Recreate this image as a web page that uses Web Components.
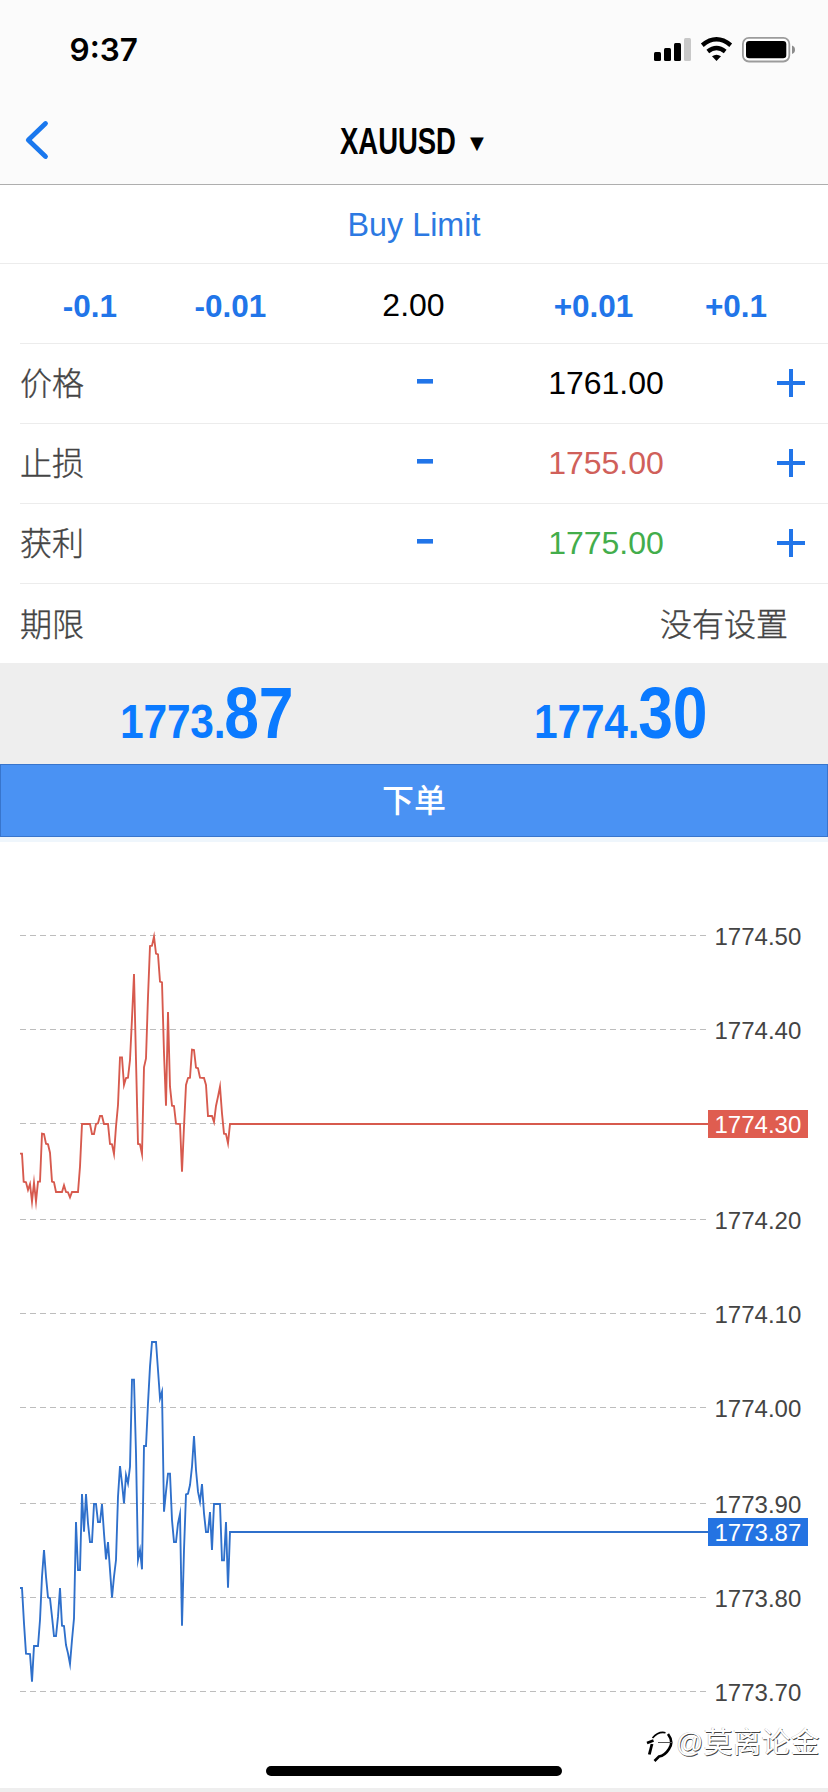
<!DOCTYPE html>
<html lang="zh-CN">
<head>
<meta charset="utf-8">
<title>XAUUSD</title>
<style>
html,body{margin:0;padding:0;background:#fff}
body{width:828px;height:1792px;overflow:hidden;font-family:"Liberation Sans","Noto Sans CJK SC",sans-serif;color:#000}
</style>
</head>
<body>
<order-screen></order-screen>
<script>
const define = (name, html, after) => {
  const tpl = document.createElement('template');
  tpl.innerHTML = html;
  customElements.define(name, class extends HTMLElement {
    constructor() {
      super();
      this.attachShadow({ mode: 'open' }).appendChild(tpl.content.cloneNode(true));
    }
    connectedCallback() { if (after) after(this, this.shadowRoot); }
  });
};

define('status-bar', `
<style>
:host{display:flex;justify-content:space-between;align-items:center;height:99px;padding:0 33.500px 0 69.500px;box-sizing:border-box}
.time{font:600 31.500px/40px Inter,sans-serif;padding-top:1px}
svg{display:block}
</style>
<span class="time">9:37</span>
<svg width="142" height="26" viewBox="652 37 142 26" aria-hidden="true">
  <rect x="653" y="52" width="7" height="9" rx="1.5"/><rect x="663" y="48" width="7" height="13" rx="1.5"/>
  <rect x="673" y="43" width="7" height="18" rx="1.5"/><rect x="683" y="38" width="7" height="23" rx="1.5" fill="#c8c8c8"/>
  <g fill="none" stroke="#000" stroke-width="4.4"><path d="M701.3 45.2Q715.5 33.4 729.7 45.2"/><path d="M706.8 51.4Q715.5 44.6 724.2 51.4"/></g>
  <path d="M711 56.3Q715.5 53 720 56.3L715.5 61z"/>
  <rect x="741.9" y="37.9" width="46.4" height="23.6" rx="6" fill="#fff" stroke="#9c9c9c" stroke-width="1.8"/>
  <rect x="745" y="41" width="40.3" height="17.3" rx="3.2"/>
  <path d="M791 45.5Q794 46.500 794 49.700T791 54z" fill="#8c8c8c"/>
</svg>`);

define('nav-bar', `
<style>
:host{display:grid;grid-template-columns:120px 1fr 120px;align-items:center;height:85px}
svg{display:block;margin:-3px 0 0 24px}
.title{display:flex;align-items:center;justify-content:flex-start;margin-left:220px;height:40px;white-space:nowrap}
.name{width:115px;font-weight:700;font-size:37px;line-height:40px}
.name span{display:inline-block;transform:scaleX(.742);transform-origin:0 50%}
.arrow{font:18px/40px "DejaVu Sans",sans-serif;margin-left:15px;margin-top:3px}
</style>
<svg width="28" height="42" viewBox="24 119 28 42" fill="none" stroke="#1a78ee" stroke-width="4.8" stroke-linecap="round" stroke-linejoin="round"><path d="M45.500 123.500L28.300 140L45.500 156.500"/></svg>
<div class="title"><div class="name"><span><slot></slot></span></div><span class="arrow">▼</span></div>`);

define('volume-row', `
<style>
:host{display:grid;grid-template-columns:160px 121px 245px 115px 170px;height:80px;box-sizing:border-box;padding-left:10px;background:linear-gradient(#ececec,#ececec) 20px 100%/100% 1px no-repeat;align-items:center;text-align:center;font-size:32px;line-height:40px}
b{color:#2175e9;font-size:31.500px;font-weight:700;padding-top:4px}
span{padding-top:1px}
</style>
<b>-0.1</b><b>-0.01</b><span>2.00</span><b>+0.01</b><b>+0.1</b>`);

define('price-stepper', `
<style>
:host{display:grid;grid-template-columns:397px 100px 217px 1fr;height:80px;margin-left:20px;box-sizing:border-box;border-bottom:1px solid #ececec;align-items:center;font-size:32px;line-height:40px}
.label{color:#444;font-weight:300;-webkit-text-stroke:.35px #444}
svg{display:block}
.plus{margin-left:43px;margin-top:-1px}.minus{margin-top:-4px}
.value{text-align:center;width:120px;margin-left:29px;margin-top:-1px}
</style>
<span class="label"></span>
<svg class="minus" width="16" height="5" role="img" aria-label="minus"><rect width="16" height="4.600" fill="#2175e9"/></svg>
<span class="value"><slot></slot></span>
<svg class="plus" width="28" height="28" role="img" aria-label="plus"><path d="M0 14h28M14 0v28" stroke="#2175e9" stroke-width="4"/></svg>`,
(host, root) => {
  root.querySelector('.label').textContent = host.getAttribute('label');
  root.querySelector('.value').style.color = host.getAttribute('tone');
});

define('setting-row', `
<style>
:host{display:flex;justify-content:space-between;align-items:center;height:79px;padding:2px 40px 0 20px;box-sizing:border-box;font-size:32px;line-height:40px;color:#444;font-weight:300;-webkit-text-stroke:.35px #444}
</style>
<slot name="label"></slot><slot name="value"></slot>`);

define('quote-price', `
<style>
:host{display:block;height:101px;color:#0a7aff;font-weight:700;white-space:nowrap}
.n{display:flex;align-items:baseline;transform:scaleX(.867);transform-origin:0 0;margin-left:120px;padding-top:10px;line-height:80px}
.i{font-size:49px;letter-spacing:-.2px}.f{font-size:72px;margin-left:-1.500px;letter-spacing:-.2px}
</style>
<div class="n"><span class="i"><slot name="int"></slot></span><span class="f"><slot name="frac"></slot></span></div>`);

define('submit-button', `
<style>
:host{display:flex;align-items:center;justify-content:center;height:73px;box-sizing:border-box;border:1px solid #3875cc;background:#4a92f3;color:#fff;font-size:32px;line-height:40px;font-weight:500;box-shadow:0 5px 0 #eff6fc}
</style><slot></slot>`);

define('tick-chart', `
<style>
:host{display:block;height:951px}
svg{display:block}
text{font-size:24px;fill:#444}
.tag{fill:#fff}
.grid{stroke:#bdbdbd;stroke-width:1;stroke-dasharray:6 4}
polyline{fill:none;stroke-width:5.600;stroke-linejoin:miter;stroke-miterlimit:10}
</style>
<svg width="828" height="951" viewBox="0 837 828 951">
<g class="axis"></g>
<g transform="translate(0 910) scale(.33333)"><polyline stroke="#d75a4e" points="60,731 66,731 71,815 78,817 84,840 90,822 96,875 102,818 108,875 114,815 120,815 126,671 132,672 138,701 144,703 150,728 156,815 162,817 168,846 186,846 192,826 198,846 204,847 210,862 216,846 234,846 240,770 246,642 270,642 276,672 282,672 288,642 294,640 300,618 306,618 312,642 324,642 330,702 336,703 342,732 348,650 354,585 360,442 366,442 372,525 378,504 384,503 390,450 396,325 402,192 408,450 414,702 420,703 426,732 432,472 438,445 444,260 450,108 456,107 462,80 468,131 474,133 480,215 486,217 492,430 498,587 504,306 510,530 516,587 522,588 528,641 540,642 546,785 552,650 558,525 564,504 570,503 576,419 582,420 588,473 594,475 600,503 612,504 618,525 624,618 636,618 642,636 648,588 654,560 660,530 666,610 672,671 678,672 684,700 690,642 2124,642"/></g>
<g transform="translate(0 1310) scale(.33333)"><polyline stroke="#2f70cb" points="60,834 66,834 72,940 78,1031 90,1032 96,1115 102,1008 114,1008 120,930 126,800 132,720 138,800 144,862 150,865 156,920 162,978 168,978 174,920 180,834 186,947 192,948 198,1005 204,1030 210,1062 216,990 222,925 228,636 234,780 240,780 246,552 252,665 258,552 264,640 270,696 276,696 282,582 288,582 294,636 300,636 306,582 312,670 318,748 324,696 330,780 336,863 342,800 348,750 354,560 360,468 366,520 372,580 378,495 384,520 390,470 396,209 402,209 408,430 414,750 420,720 426,778 432,408 438,408 444,280 450,170 456,96 468,96 474,180 480,265 486,245 492,605 498,545 504,491 510,491 516,630 522,696 528,696 534,640 540,612 546,947 552,720 558,553 564,551 570,525 576,470 582,378 588,480 594,545 600,575 606,522 612,610 618,666 624,666 630,606 636,720 642,582 660,582 666,751 672,751 678,636 684,833 690,666 2124,666"/></g>
<rect x="708" y="1110" width="100" height="28" fill="#df5d50"/><text class="tag" x="714.5" y="1133">1774.30</text>
<rect x="708" y="1518" width="100" height="28" fill="#2473e2"/><text class="tag" x="714.5" y="1541">1773.87</text>
</svg>`, (host, root) => {
  const rows = [['1774.50',935],['1774.40',1029],['',1123],['1774.20',1219],['1774.10',1313],['1774.00',1407],['1773.90',1503],['1773.80',1597],['1773.70',1691]];
  root.querySelector('.axis').innerHTML = rows.map(([t, y]) =>
    `<path class="grid" d="M20 ${y + .5}H706"/>` + (t ? `<text x="714.5" y="${y + 10}">${t}</text>` : '')).join('');
});

define('author-mark', `
<style>
:host{position:absolute;left:646px;top:1723px;display:flex;align-items:center;height:40px;white-space:nowrap;color:#fff;font-size:29px;line-height:40px}
span{text-shadow:.8px .8px .5px #444,-.4px -.4px .5px #bbb}
.at{font-size:27px;margin-left:1px}
svg{display:block;flex:none}
</style>
<svg width="29" height="40" viewBox="645 1722 29 40" fill="none" stroke="#000">
<path d="M651.500 1737Q657.500 1730 664.500 1731.700" stroke-width="1.600"/><path d="M667 1733Q673 1741 668 1748Q664 1754.500 658 1755.500L653.500 1760" stroke-width="2.600"/>
<path d="M646 1742L652.500 1739.500" stroke-width="2.600"/><path d="M651 1743L648.300 1753.500" stroke-width="2.800"/><path d="M657 1741.500H671" stroke-width="1" stroke="#555"/>
</svg><span class="at">@</span><span>莫离论金</span>`);

define('order-screen', `
<style>
:host{display:flex;flex-direction:column;width:828px;height:1792px;position:relative;background:#fff}
header{height:185px;background:#fbfbfb;border-bottom:1px solid #aeaeae;box-sizing:border-box}
.type{display:flex;height:79px;box-sizing:border-box;border-bottom:1px solid #ececec;align-items:center;justify-content:center;color:#2c79e2;font-size:32.300px;line-height:40px;padding-top:1px}
.quotes{display:grid;grid-template-columns:1fr 1fr;background:#eee;height:101px}
footer{height:4px;background:#eee}
.home{position:absolute;left:266px;top:1766px;width:296px;height:10px;border-radius:5px;background:#000}
</style>
<header><status-bar></status-bar><nav-bar>XAUUSD</nav-bar></header>
<div class="type">Buy Limit</div>
<volume-row></volume-row>
<price-stepper label="价格" tone="#000">1761.00</price-stepper>
<price-stepper label="止损" tone="#d0605a">1755.00</price-stepper>
<price-stepper label="获利" tone="#43ad4b">1775.00</price-stepper>
<setting-row><span slot="label">期限</span><span slot="value">没有设置</span></setting-row>
<div class="quotes">
<quote-price><span slot="int">1773.</span><span slot="frac">87</span></quote-price>
<quote-price><span slot="int">1774.</span><span slot="frac">30</span></quote-price>
</div>
<submit-button>下单</submit-button>
<tick-chart></tick-chart>
<footer></footer>
<author-mark></author-mark>
<div class="home"></div>`);
</script>
</body>
</html>
